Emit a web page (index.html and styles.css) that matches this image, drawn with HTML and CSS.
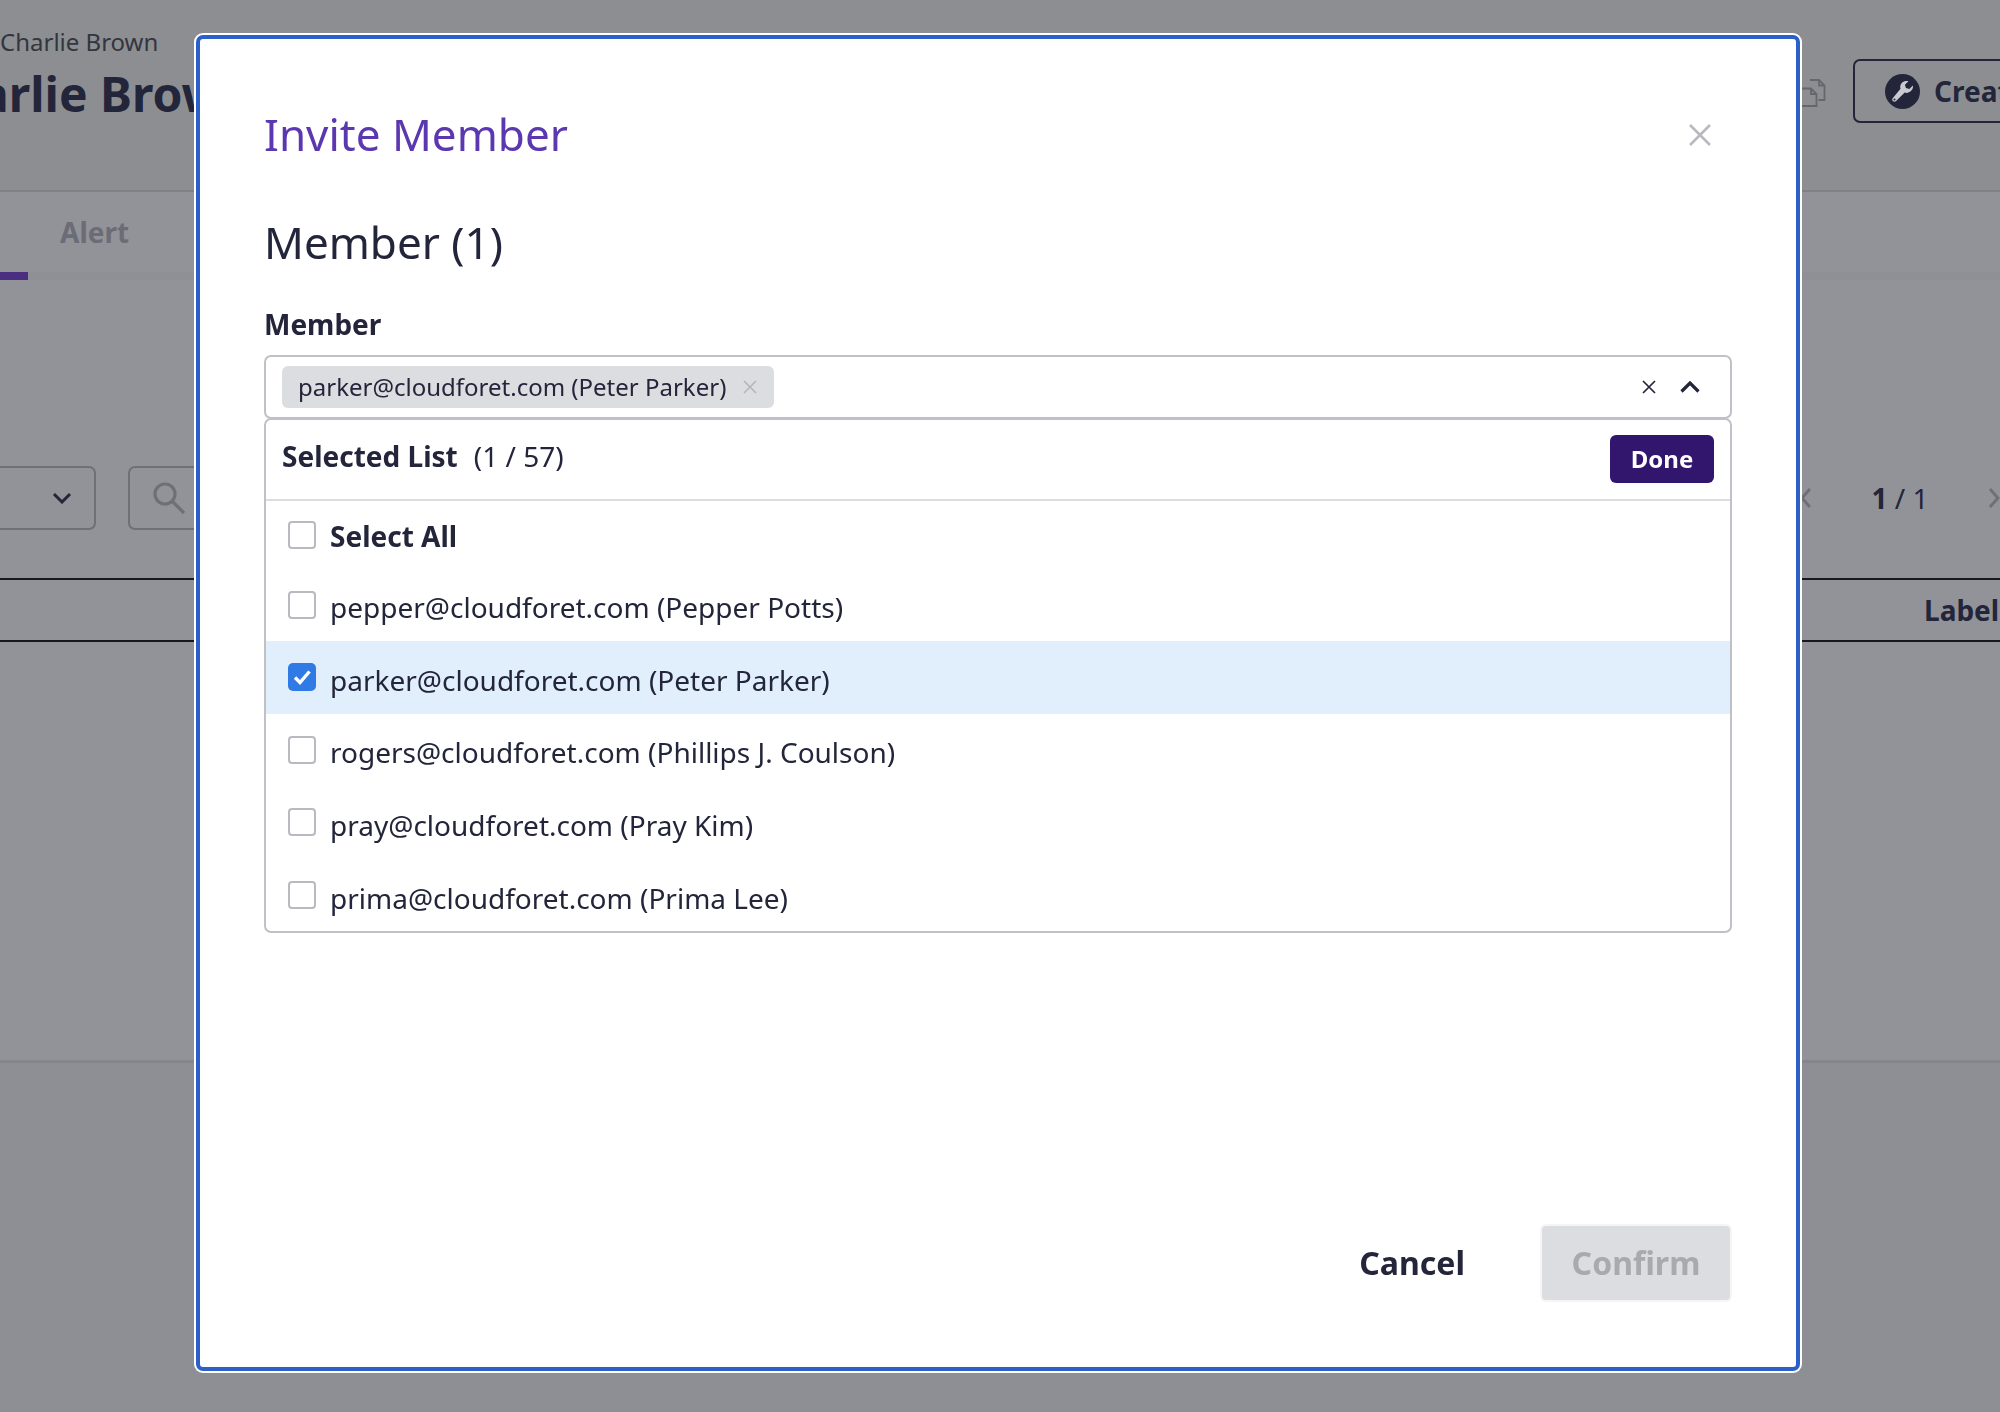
FILE: index.html
```html
<!DOCTYPE html>
<html lang="en">
<head>
<meta charset="utf-8">
<title>Invite Member</title>
<link rel="stylesheet" href="styles.css">
</head>
<body>
<div class="page">
  <header class="page-head">
    <div class="head-text">
      <div class="crumb">Charlie Brown</div>
      <h1 class="page-title">Charlie Brown</h1>
    </div>
    <svg class="copy-icon" viewBox="0 0 30 28" fill="none" stroke="#66676e" stroke-width="1.800">
      <path d="M10 1h9l5.500 5.500V21h-6"/><path d="M19 1v5.500h5.500"/>
      <path d="M1 9.500h10l5.500 5.500v12H1z" fill="#8d8e92"/><path d="M11 9.500V15h5.500"/>
    </svg>
    <button class="create-btn">
      <span class="wrench">
        <svg viewBox="0 0 24 24" width="24" height="24"><path fill="#c9cad0" d="M21.800 6.600l-3.500 3.500-3.400-1-1-3.400 3.500-3.500c-2.200-.7-4.700-.2-6.400 1.500-1.700 1.700-2.200 4-1.500 6.100L1.900 18.900c-.9.900-.9 2.300 0 3.200.9.900 2.300.9 3.200 0l8.600-8.500c2.100.7 4.500.2 6.200-1.500 1.700-1.600 2.500-3.500 1.900-5.500z"/><circle cx="3.500" cy="20.500" r="1" fill="#23253a"/></svg>
      </span>
      Create
    </button>
  </header>
  <nav class="tabs">
    <span class="tab-active"></span>
    <span class="tab">Alert</span>
  </nav>
  <div class="toolbar">
    <div class="select">
      <svg viewBox="0 0 20 12" width="20" height="12" fill="none" stroke="#23253a" stroke-width="3"><path d="M2 2l8 8 8-8"/></svg>
    </div>
    <div class="search">
      <svg viewBox="0 0 34 34" width="34" height="34" fill="none" stroke="#6f7076" stroke-width="3.200"><circle cx="13" cy="13" r="10"/><path d="M20 20l12 12"/></svg>
    </div>
    <div class="pager">
      <svg viewBox="0 0 12 22" width="12" height="22" fill="none" stroke="#6f7076" stroke-width="3"><path d="M10 2L2 11l8 9"/></svg>
      <span class="pager-text"><b>1</b> / 1</span>
      <svg viewBox="0 0 12 22" width="12" height="22" fill="none" stroke="#6f7076" stroke-width="3"><path d="M2 2l8 9-8 9"/></svg>
    </div>
  </div>
  <div class="table-head"><span>Label</span></div>
  <div class="table-body"></div>
  <div class="page-foot"></div>
</div>

<div class="modal">
  <div class="modal-head">
    <h2 class="modal-title">Invite Member</h2>
    <svg class="modal-close" viewBox="0 0 22 22" fill="none" stroke="#b8b9be" stroke-width="2.500"><path d="M1 1l20 20M21 1L1 21"/></svg>
  </div>
  <h3 class="section-title">Member (1)</h3>
  <label class="field-label">Member</label>
  <div class="dropdown-input">
    <span class="tag">
      parker@cloudforet.com (Peter Parker)
      <svg class="tag-x" viewBox="0 0 14 14" fill="none" stroke="#b3b4ba" stroke-width="1.500"><path d="M1 1l12 12M13 1L1 13"/></svg>
    </span>
    <svg class="clear-x" viewBox="0 0 14 14" fill="none" stroke="#23253a" stroke-width="1.700"><path d="M1 1l12 12M13 1L1 13"/></svg>
    <svg class="chevron-up" viewBox="0 0 20 12" fill="none" stroke="#23253a" stroke-width="3.200"><path d="M1.500 10.500L10 2l8.500 8.500"/></svg>
  </div>
  <div class="panel">
    <div class="panel-head">
      <span class="panel-title"><b>Selected List</b><span class="count">(1 / 57)</span></span>
      <button class="done">Done</button>
    </div>
    <ul class="options">
      <li class="option option-all"><span class="check"></span><b>Select All</b></li>
      <li class="option"><span class="check"></span><span class="opt-text">pepper@cloudforet.com (Pepper Potts)</span></li>
      <li class="option is-selected"><span class="check is-checked"><svg viewBox="0 0 28 28" width="28" height="28" fill="none" stroke="#fff" stroke-width="3.400"><path d="M7 14.500l5 5 9.500-11"/></svg></span><span class="opt-text">parker@cloudforet.com (Peter Parker)</span></li>
      <li class="option"><span class="check"></span><span class="opt-text">rogers@cloudforet.com (Phillips J. Coulson)</span></li>
      <li class="option"><span class="check"></span><span class="opt-text">pray@cloudforet.com (Pray Kim)</span></li>
      <li class="option"><span class="check"></span><span class="opt-text">prima@cloudforet.com (Prima Lee)</span></li>
    </ul>
  </div>
  <div class="modal-foot">
    <button class="cancel">Cancel</button>
    <button class="confirm" disabled>Confirm</button>
  </div>
</div>
</body>
</html>
```
FILE: styles.css
```css
* { box-sizing: border-box; }
html, body { margin: 0; height: 100%; overflow: hidden; }
body {
  background: #8e8f94;
  font-family: "Noto Sans", sans-serif;
  color: #23253a;
}
ul, h1, h2, h3 { margin: 0; padding: 0; }
button { font-family: inherit; }

.page { width: 2000px; height: 1412px; overflow: hidden; }

.page-head {
  height: 192px;
  background: #8d8e92;
  border-bottom: 2px solid #808186;
  display: flex;
  align-items: flex-start;
  padding-top: 59px;
}
.head-text { width: 1802px; flex: none; margin-top: -32px; }
.crumb { font-size: 24px; line-height: 30px; color: #33353f; }
.page-title {
  font-size: 48px;
  line-height: 64px;
  font-weight: 700;
  color: #23253a;
  margin-top: 5px;
  margin-left: -82px;
  white-space: nowrap;
}
.copy-icon { width: 30px; height: 28px; flex: none; margin: 20px 0 0 -2px; }
.create-btn {
  flex: none;
  margin-left: 23px;
  width: 300px;
  height: 64px;
  border: 2.500px solid #23253a;
  border-radius: 7px;
  background: transparent;
  display: flex;
  align-items: center;
  gap: 14px;
  padding: 0 0 0 30px;
  font-size: 28px;
  font-weight: 700;
  color: #23253a;
}
.wrench {
  width: 35px; height: 35px;
  border-radius: 50%;
  background: #23253a;
  display: flex;
  align-items: center;
  justify-content: center;
  flex: none;
}

.tabs {
  height: 88px;
  background: #929398;
  position: relative;
  border-bottom: 8px solid #8f9095;
  display: flex;
  align-items: center;
}
.tab-active {
  position: absolute;
  left: 0; bottom: -8px;
  width: 28px; height: 8px;
  background: #4a2e7f;
}
.tab {
  margin-left: 60px;
  font-size: 28px;
  font-weight: 700;
  color: #6b6c75;
}

.toolbar {
  height: 298px;
  background: #929398;
  display: flex;
  align-items: flex-start;
  padding-top: 186px;
}
.select {
  width: 96px;
  height: 64px;
  border: 2px solid #6f7076;
  border-left: 0;
  border-radius: 0 7px 7px 0;
  display: flex;
  align-items: center;
  justify-content: flex-end;
  padding-right: 22px;
}
.search {
  width: 200px;
  height: 64px;
  margin-left: 32px;
  border: 2px solid #6f7076;
  border-radius: 7px;
  display: flex;
  align-items: center;
  padding-left: 22px;
}
.pager {
  margin-left: 1472px;
  height: 64px;
  width: 200px;
  display: flex;
  align-items: center;
  flex: none;
}
.pager-text { width: 178px; text-align: center; font-size: 28px; color: #23253a; }
.pager-text b { font-weight: 700; }

.table-head {
  height: 64px;
  background: #929398;
  border-top: 2px solid #17181c;
  border-bottom: 2px solid #17181c;
  display: flex;
  align-items: center;
  padding-left: 1924px;
  font-size: 28px;
  font-weight: 700;
  white-space: nowrap;
}
.table-body { height: 421px; background: #929398; border-bottom: 3px solid #85868a; }
.page-foot { height: 352px; background: #8e8f94; }

.modal {
  position: fixed;
  left: 196px; top: 35px;
  width: 1604px;
  height: 1336px;
  background: #fff;
  border: 4px solid #2a60c8;
  border-radius: 7px;
  box-shadow: 0 0 0 2px #fff;
  padding: 0 64px;
  display: flex;
  flex-direction: column;
}
.modal-head {
  height: 125px;
  display: flex;
  align-items: flex-end;
  justify-content: space-between;
  flex: none;
}
.modal-title {
  font-size: 44px;
  line-height: 60px;
  font-weight: 400;
  color: #5b38b0;
}
.modal-close { width: 22px; height: 22px; margin: 0 21px 18px 0; }
.section-title {
  font-size: 44px;
  line-height: 60px;
  font-weight: 400;
  margin-top: 48px;
}
.field-label {
  display: block;
  font-size: 28px;
  line-height: 36px;
  font-weight: 700;
  margin-top: 34px;
}
.dropdown-input {
  height: 64px;
  margin-top: 13px;
  border: 2px solid #c0c1c6;
  border-radius: 7px;
  display: flex;
  align-items: center;
  padding: 0 30px 0 16px;
}
.tag {
  height: 42px;
  width: 492px;
  background: #dcdde0;
  border-radius: 6px;
  display: flex;
  align-items: center;
  justify-content: space-between;
  padding: 0 17px 2px 16px;
  font-size: 24px;
  white-space: nowrap;
  margin-right: auto;
}
.tag-x { width: 14px; height: 14px; flex: none; margin-top: 1px; }
.clear-x { width: 14px; height: 14px; flex: none; margin-right: 24px; }
.chevron-up { width: 20px; height: 12px; flex: none; }

.panel {
  height: 515px;
  margin-top: -1px;
  border: 2px solid #c0c1c6;
  border-radius: 7px;
  overflow: hidden;
}
.panel-head {
  height: 82px;
  border-bottom: 2px solid #dcdde0;
  display: flex;
  align-items: center;
  justify-content: space-between;
  padding: 0 16px;
  margin-top: -1px;
}
.panel-title { font-size: 28px; margin-top: -6px; }
.count { font-weight: 400; margin-left: 16px; }
.done {
  width: 104px;
  height: 48px;
  border: 0;
  border-radius: 6px;
  background: #32166e;
  color: #fff;
  font-size: 24px;
  font-weight: 700;
  padding: 0 0 2px;
}
.options { list-style: none; padding-top: 1px; }
.option {
  height: 72.600px;
  display: flex;
  align-items: center;
  gap: 14px;
  padding-left: 22px;
  font-size: 28px;
}
.option-all { height: 66.400px; }
.option-all b { margin-top: 2px; }
.opt-text { padding-top: 5px; white-space: nowrap; }
.is-selected { background: #e1effd; }
.check {
  width: 28px;
  height: 28px;
  flex: none;
  border: 2px solid #b9bac0;
  border-radius: 4px;
  background: #fff;
}
.is-checked { border: 0; background: #2f7ae5; border-radius: 5px; }
.is-checked svg { display: block; }

.modal-foot {
  margin-top: auto;
  margin-bottom: 65px;
  display: flex;
  align-items: center;
  justify-content: flex-end;
  gap: 75px;
}
.cancel {
  border: 0;
  padding: 0 0 2px;
  background: none;
  font-size: 32px;
  font-weight: 700;
  color: #23253a;
}
.confirm {
  width: 192px;
  height: 78px;
  border: 2px solid #f5f5f6;
  border-radius: 6px;
  background: #dcdde0;
  padding: 0 0 2px;
  font-size: 32px;
  font-weight: 700;
  color: #a9aab0;
}
```
